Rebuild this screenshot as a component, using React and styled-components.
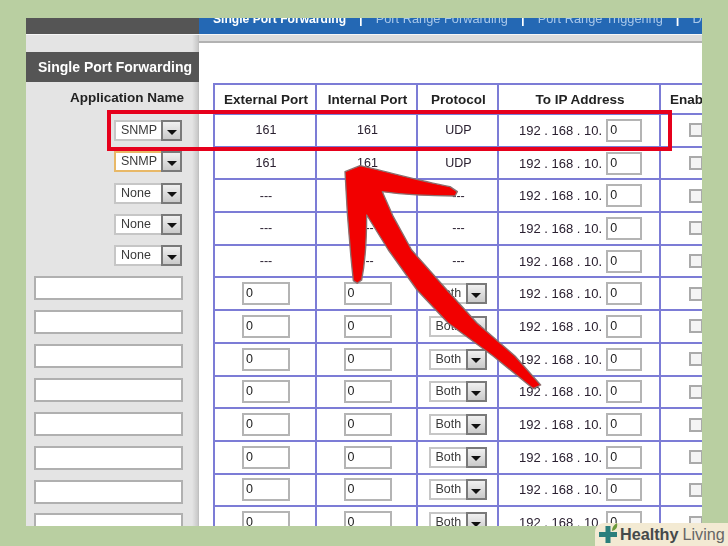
import React from 'react';
import styled, { createGlobalStyle } from 'styled-components';

const GlobalStyle = createGlobalStyle`
html, body {
  margin: 0;
  padding: 0;
  background: #b9cfa1;
}
`

const Page = styled.div`
position: relative;
width: 728px;
height: 546px;
box-sizing: border-box;
padding: 18px 26px 20px;
background: #b9cfa1;
overflow: hidden;
font-family: "Liberation Sans", Arial, sans-serif;
color: #222;
`

const Frame = styled.div`
position: relative;
width: 676px;
height: 508px;
overflow: hidden;
background: #e4e4e4;
`

const Soft = styled.div`
filter: blur(0.4px);
`

const TopBar = styled.div`
display: flex;
height: 16px;
overflow: hidden;
`

const TopLeft = styled.div`
width: 173px;
flex: none;
background: #555;
`

const Tabs = styled.div`
flex: 1;
display: flex;
gap: 13px;
padding-left: 14px;
background: #2468b4;
white-space: nowrap;
`

const Tab = styled.span`
margin-top: -7px;
font-size: ${props => props.$active ? '12.1px' : '12.8px'};
line-height: 16px;
font-weight: ${props => props.$active ? 700 : 400};
color: ${props => props.$active ? '#fff' : '#a9c8ea'};
`

const Sep = styled(Tab)`
font-size: 13px;
font-weight: 700;
color: #fff;
`

const Body = styled.div`
display: flex;
height: 492px;
background: #dcdcdc;
border-top: 1px solid #f6f6f6;
`

const Sidebar = styled.aside`
width: 173px;
flex: none;
padding-top: 17px;
box-sizing: border-box;
background: linear-gradient(to right, #e4e4e4 166px, #c8c8c8 172px, #b8b8b8 173px);
`

const SideTitle = styled.h2`
margin: 0;
height: 30px;
padding-right: 7px;
background: #555;
color: #fff;
font-size: 14px;
font-weight: 700;
line-height: 31px;
text-align: right;
white-space: nowrap;
`

const AppLabel = styled.div`
height: 38px;
padding-right: 15px;
font-size: 13.5px;
font-weight: 700;
line-height: 32px;
text-align: right;
color: #222;
`

const SelectColumn = styled.div`
display: flex;
flex-direction: column;
align-items: flex-end;
gap: 10.3px;
padding-right: 17px;
`

const NameColumn = styled.div`
display: flex;
flex-direction: column;
gap: 9.9px;
margin-top: 10px;
padding-left: 8px;
`

const NameInput = styled.div`
width: 149px;
height: 24px;
flex: none;
box-sizing: border-box;
background: #fff;
border: 2px solid #b0b0b0;
`

const SelectBox = styled.div`
display: flex;
align-items: center;
justify-content: space-between;
width: ${props => props.$width}px;
height: 21px;
flex: none;
box-sizing: border-box;
padding-left: ${props => props.$pad}px;
background: #fff;
border: 2px solid ${props => props.$focus ? '#e8b867' : '#c6c6c6'};
border-right: none;
font-size: 12.5px;
line-height: 17px;
color: #3a3a3a;
`

const SelectButton = styled.span`
display: flex;
align-items: center;
justify-content: center;
width: 21px;
height: 21px;
flex: none;
box-sizing: border-box;
background: linear-gradient(#f0f0f0, #cacaca);
border: 2px solid #7a7a7a;
&::after {
  content: '';
  margin-top: 3px;
  border-left: 5px solid transparent;
  border-right: 5px solid transparent;
  border-top: 5px solid #111;
}
`

const Main = styled.main`
flex: 1;
margin-top: 6px;
padding: 40px 0 0 14px;
box-sizing: border-box;
background: #fff;
border-top: 2px solid #b2b2b2;
overflow: hidden;
`

const Table = styled.div`
width: 520px;
border-top: 2px solid #7c7cd6;
`

const Row = styled.div`
display: grid;
grid-template-columns: 102px 101px 81px 162px 74px;
height: ${props => props.$head ? '30px' : '32.7px'};
box-sizing: border-box;
border-bottom: 2px solid #7c7cd6;
`

const Cell = styled.div`
display: flex;
align-items: center;
justify-content: center;
box-sizing: border-box;
padding-left: ${props => props.$flush ? '0' : '2px'};
border-left: 2px solid #7c7cd6;
font-size: 12.5px;
white-space: nowrap;
color: #2a2030;
`

const HeadCell = styled(Cell)`
font-size: 13.5px;
font-weight: 700;
justify-content: ${props => props.$left ? 'flex-start' : 'center'};
padding-left: ${props => props.$left ? '9px' : '2px'};
color: #222;
`

const IpCell = styled(Cell)`
justify-content: flex-start;
padding-left: 20px;
gap: 4px;
font-size: 13px;
`

const ValueInput = styled.div`
width: ${props => props.$width}px;
height: 23px;
box-sizing: border-box;
padding-left: 2px;
background: #fff;
border: 2px solid #b4b4b4;
font-size: 12.5px;
line-height: 19px;
text-align: left;
color: #222;
`

const CheckCell = styled(Cell)`
justify-content: flex-start;
padding-left: 28px;
`

const CheckBox = styled.span`
width: 14px;
height: 14px;
flex: none;
box-sizing: border-box;
background: #f4f4f4;
border: 2px solid #aaa;
`

const Highlight = styled.div`
position: absolute;
left: 81px;
top: 92px;
width: 565px;
height: 41px;
box-sizing: border-box;
border: 4px solid #e6001c;
`

const ArrowSvg = styled.svg`
position: absolute;
left: 274px;
top: 132px;
width: 260px;
height: 260px;
`

const Badge = styled.div`
position: absolute;
right: 0;
bottom: 0;
display: flex;
align-items: center;
gap: 1px;
width: 133px;
height: 23px;
box-sizing: border-box;
padding-left: 4px;
background: #f3ead3;
border-top-left-radius: 9px;
font-size: 16.2px;
line-height: 23px;
white-space: nowrap;
color: #666;
`

const BadgeIcon = styled.svg`
width: 20px;
height: 23px;
flex: none;
`

const BadgeBold = styled.b`
color: #45494a;
margin-right: 4px;
`

const apps = [
  { name: 'SNMP' },
  { name: 'SNMP', focus: true },
  { name: 'None' },
  { name: 'None' },
  { name: 'None' },
]

const rows = [
  { ext: '161', int: '161', proto: 'UDP' },
  { ext: '161', int: '161', proto: 'UDP' },
  { ext: '---', int: '---', proto: '---' },
  { ext: '---', int: '---', proto: '---' },
  { ext: '---', int: '---', proto: '---' },
  ...Array.from({ length: 8 }, () => ({ edit: true })),
]

const Select = ({ value, width, pad, focus }) => (
  <SelectBox $width={width} $pad={pad} $focus={focus}>
    {value}
    <SelectButton />
  </SelectBox>
)

const App = () => {
  return (
    <Page>
      <GlobalStyle />
      <Frame>
        <Soft>
          <TopBar>
            <TopLeft />
            <Tabs>
              <Tab $active>Single Port Forwarding</Tab>
              <Sep>|</Sep>
              <Tab>Port Range Forwarding</Tab>
              <Sep>|</Sep>
              <Tab>Port Range Triggering</Tab>
              <Sep>|</Sep>
              <Tab>DMZ</Tab>
            </Tabs>
          </TopBar>
          <Body>
            <Sidebar>
              <SideTitle>Single Port Forwarding</SideTitle>
              <AppLabel>Application Name</AppLabel>
              <SelectColumn>
                {apps.map((a, i) => (
                  <Select key={i} value={a.name} width={68} pad={5} focus={a.focus} />
                ))}
              </SelectColumn>
              <NameColumn>
                {Array.from({ length: 8 }, (_, i) => <NameInput key={i} />)}
              </NameColumn>
            </Sidebar>
            <Main>
              <Table>
                <Row $head>
                  <HeadCell>External Port</HeadCell>
                  <HeadCell>Internal Port</HeadCell>
                  <HeadCell>Protocol</HeadCell>
                  <HeadCell>To IP Address</HeadCell>
                  <HeadCell $left>Enabled</HeadCell>
                </Row>
                {rows.map((r, i) => (
                  <Row key={i}>
                    <Cell>{r.edit ? <ValueInput $width={48}>0</ValueInput> : r.ext}</Cell>
                    <Cell>{r.edit ? <ValueInput $width={48}>0</ValueInput> : r.int}</Cell>
                    <Cell $flush={r.edit}>{r.edit ? <Select value="Both" width={58} pad={5} /> : r.proto}</Cell>
                    <IpCell>192 . 168 . 10. <ValueInput $width={36}>0</ValueInput></IpCell>
                    <CheckCell><CheckBox /></CheckCell>
                  </Row>
                ))}
              </Table>
            </Main>
          </Body>
        </Soft>
        <Highlight />
        <ArrowSvg viewBox="0 0 780 780">
          <path
            d="M135 65 L180 47 C250 62 350 90 450 110 L472 125 L465 138 C400 138 320 135 247 125 L280 200 L335 300 L441 420 L531 519 L645 618 L722 705 L700 716 L579 618 L444 519 L351 420 L265 300 L200 195 C200 260 195 340 185 390 L172 400 L160 392 C150 300 140 180 135 65 Z"
            fill="#f20000"
            stroke="#8a7070"
            strokeWidth="4"
            strokeLinejoin="round"
          />
        </ArrowSvg>
      </Frame>
      <Badge>
        <BadgeIcon viewBox="0 0 20 23">
          <path d="M6.5 9 H0 V14 H6.5 V20 H11.5 V14 H18 V9 H11.5 V3 H6.5 Z" fill="#2b7f7c" />
          <path d="M13 8 C13 4 15 2 18 0 C19 4 17 7 13 8 Z" fill="#6c9a3a" />
        </BadgeIcon>
        <span><BadgeBold>Healthy</BadgeBold>Living</span>
      </Badge>
    </Page>
  )
}

export default App
